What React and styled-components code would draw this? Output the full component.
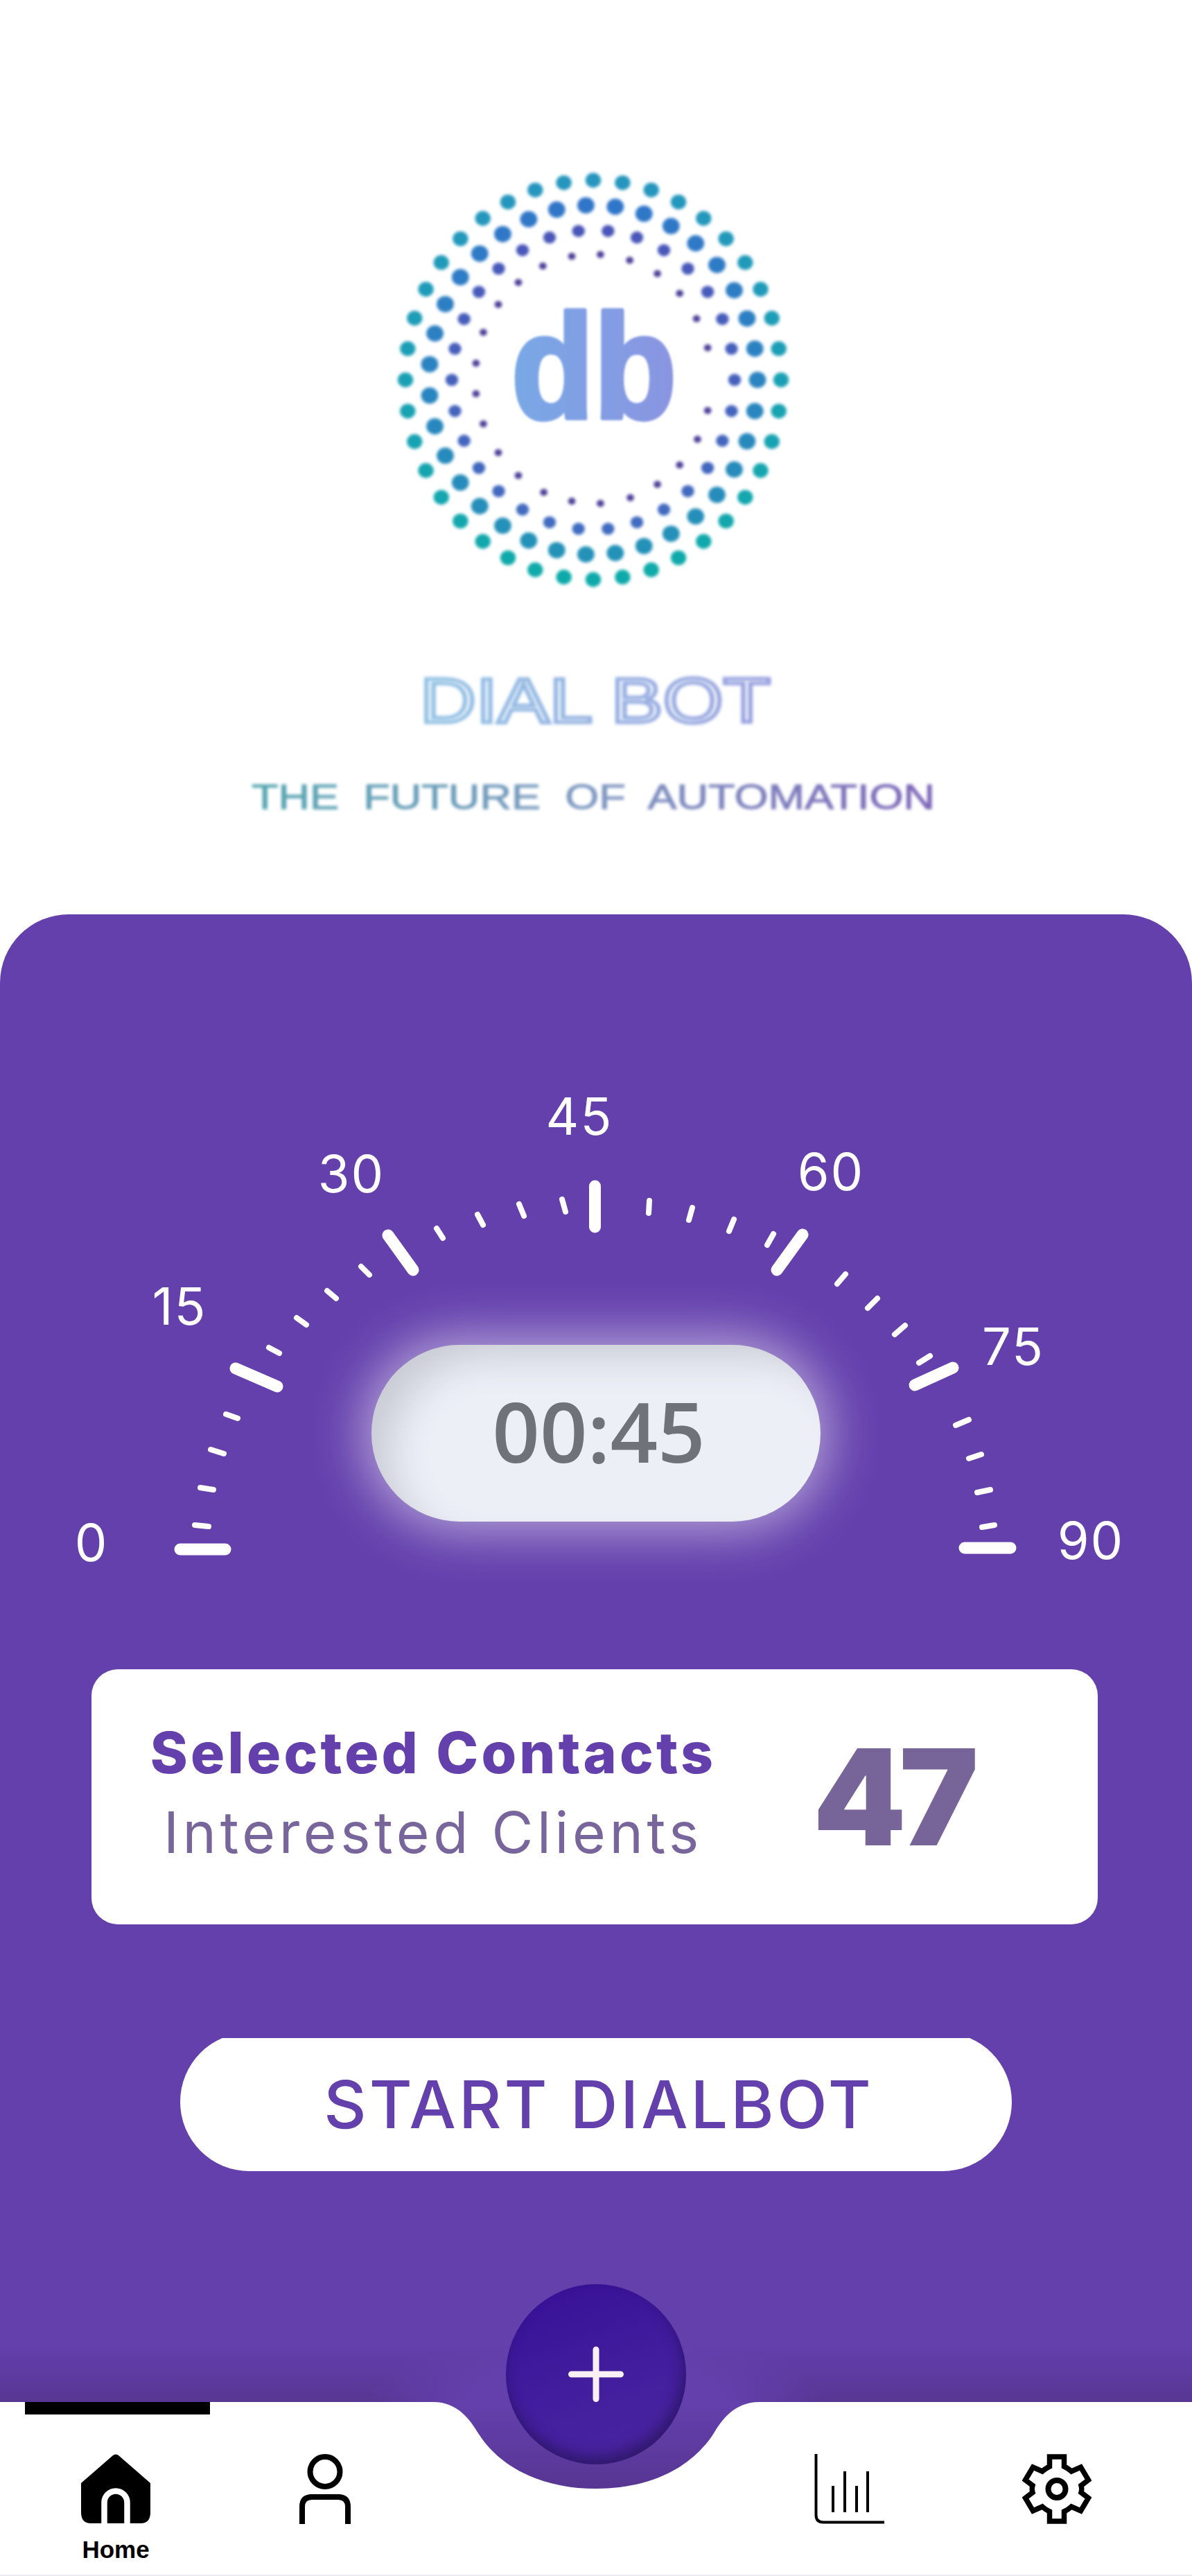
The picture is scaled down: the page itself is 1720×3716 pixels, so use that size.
import React from "react";
import styled, { createGlobalStyle } from "styled-components";

const Global = createGlobalStyle`
  html, body { margin: 0; padding: 0; background: #fff; }
  body { font-family: "Inter", "Liberation Sans", sans-serif; }
  * { box-sizing: border-box; }
`;

const Page = styled.div`
  position: relative;
  width: 1720px;
  height: 3716px;
  overflow: hidden;
  background: #fff;
`;
const Header = styled.header`
  height: 1319px;
  padding-top: 220px;
  display: flex;
  justify-content: center;
  align-items: flex-start;
`;
const LogoSvg = styled.svg`
  display: block;
  width: 1000px;
  height: 980px;
`;
const SoftGroup = styled.g`
  filter: blur(${(p) => p.$blur}px);
`;
const DialBot = styled.text`
  font-family: "Liberation Sans", sans-serif;
  font-weight: 400;
  font-size: 90px;
`;
const Tagline = styled.text`
  font-family: "Liberation Sans", sans-serif;
  font-weight: 400;
  font-size: 50px;
  word-spacing: 14px;
`;
const LogoMark = styled.text`
  font-family: "Liberation Sans", sans-serif;
  font-weight: 700;
  font-size: 214px;
`;
const Panel = styled.main`
  height: 2146px;
  padding-top: 241px;
  border-radius: 99px 99px 0 0;
  background:
    radial-gradient(ellipse 330px 110px at 50% 100%, #6440ad 55%, rgba(100, 64, 173, 0) 100%),
    linear-gradient(to bottom, #6440ad calc(100% - 85px), #573693 100%);
`;
const Gauge = styled.section`
  position: relative;
  width: 1720px;
  height: 720px;
`;
const GaugeSvg = styled.svg`
  display: block;
  width: 1720px;
  height: 720px;
`;
const GaugeLabel = styled.text`
  font-family: "Inter", sans-serif;
  font-weight: 400;
  font-size: 74px;
  letter-spacing: 2px;
  fill: #fff;
  text-anchor: middle;
`;
const TimerPill = styled.div`
  position: absolute;
  left: 536px;
  top: 380px;
  width: 648px;
  height: 255px;
  border-radius: 128px;
  background: #eceff6;
  box-shadow:
    0 0 75px 12px rgba(255, 255, 255, 0.55),
    inset 40px 30px 55px -14px rgba(60, 60, 80, 0.2);
  display: flex;
  align-items: center;
  justify-content: center;
  padding: 0 0 8px 8px;
`;
const TimerText = styled.span`
  font-family: "Open Sans", sans-serif;
  font-weight: 600;
  font-size: 120px;
  line-height: 1;
  color: #6f7278;
`;
const ContactsCard = styled.section`
  width: 1452px;
  height: 368px;
  margin: 128px 0 0 132px;
  background: #fff;
  border-radius: 38px;
  display: flex;
  align-items: center;
  padding-left: 73px;
`;
const ContactsText = styled.div`
  width: 840px;
  padding-bottom: 12px;
  display: flex;
  flex-direction: column;
  align-items: center;
`;
const SelectedLine = styled.div`
  font-family: "Inter", sans-serif;
  font-weight: 800;
  font-size: 82px;
  line-height: 115px;
  letter-spacing: 4.2px;
  color: #6440ad;
  white-space: nowrap;
`;
const InterestedLine = styled.div`
  font-family: "Inter", sans-serif;
  font-weight: 400;
  font-size: 82px;
  line-height: 115px;
  letter-spacing: 5.6px;
  color: #77659b;
  white-space: nowrap;
`;
const ContactCount = styled.div`
  margin-left: 128px;
  font-family: "Inter", sans-serif;
  font-weight: 900;
  font-size: 192px;
  line-height: 1;
  letter-spacing: -10px;
  color: #776498;
`;
const StartButton = styled.button`
  display: block;
  width: 1200px;
  height: 200px;
  margin: 156px 0 0 260px;
  border: 0;
  border-radius: 100px;
  background: #fff;
  clip-path: inset(8px 0 0 0);
  font-family: "Inter", sans-serif;
  font-weight: 500;
  font-size: 95px;
  letter-spacing: 4px;
  color: #6440ad;
  padding: 6px 0 0 8px;
`;
const Nav = styled.nav`
  position: relative;
  height: 251px;
  padding-top: 75px;
  display: grid;
  grid-template-columns: 334px 270px 516px 210px 390px;
  border-bottom: 2px solid #eceaf2;
`;
const NavIndicator = styled.div`
  position: absolute;
  left: 36px;
  top: 0;
  width: 267px;
  height: 18px;
  background: #000;
`;
const NavItem = styled.div`
  display: flex;
  flex-direction: column;
  align-items: center;
`;
const NavSpacer = styled.div``;
const NavLabel = styled.span`
  margin-top: 18px;
  font-family: "Liberation Sans", sans-serif;
  font-weight: 700;
  font-size: 35px;
  line-height: 38px;
  color: #000;
`;
const NavIcon = styled.svg`
  display: block;
  height: 101px;
`;
const Bump = styled.svg`
  position: absolute;
  left: 600px;
  top: 3465px;
  width: 520px;
  height: 125px;
`;
const Fab = styled.button`
  position: absolute;
  left: 730px;
  top: 3295px;
  width: 260px;
  height: 260px;
  border: 0;
  border-radius: 50%;
  background: linear-gradient(160deg, #370f97 0%, #3f1a9b 40%, #4c27a3 100%);
  box-shadow: inset -4px -12px 18px rgba(30, 15, 70, 0.55);
  display: flex;
  align-items: center;
  justify-content: center;
  padding: 0;
`;
const PlusIcon = styled.svg`
  display: block;
  width: 80px;
  height: 80px;
`;

const majorTicks = [
  [260, 2235, 325, 2235],
  [340, 1974, 400, 2000],
  [560, 1782, 596, 1832],
  [858.5, 1711, 858.5, 1770],
  [1158, 1781, 1121, 1832],
  [1375, 1973, 1320, 1998],
  [1392, 2233, 1458, 2233],
];
const minorTicks = [
  [281, 2200, 301, 2202], [289, 2146, 308, 2149], [304, 2091, 323, 2097], [326, 2040, 343, 2046],
  [388, 1944, 403, 1952], [428, 1901, 442, 1911], [472, 1862, 485, 1873], [521, 1827, 533, 1839],
  [630, 1772, 639, 1786], [689, 1752, 697, 1767], [749, 1737, 756, 1754], [811, 1730, 816, 1748],
  [937, 1732, 936, 1750], [999, 1742, 994, 1760], [1059, 1759, 1052, 1776], [1116, 1780, 1107, 1796],
  [1220, 1838, 1208, 1852], [1266, 1873, 1252, 1887], [1306, 1912, 1291, 1925], [1342, 1956, 1326, 1966],
  [1398, 2048, 1379, 2056], [1416, 2098, 1398, 2104], [1429, 2149, 1410, 2153], [1435, 2200, 1417, 2203],
];
const gaugeLabels = [
  ["0", 132, 2252], ["15", 259, 1911], ["30", 507, 1720], ["45", 836, 1637],
  ["60", 1199, 1717], ["75", 1462, 1969], ["90", 1574, 2249],
];

const hex = (v) => Math.round(v).toString(16).padStart(2, "0");
const mix = (a, b, t) =>
  "#" + [0, 1, 2].map((i) => hex(a[i] + (b[i] - a[i]) * t)).join("");

const CX = 856;
const CY = 548;
const ring = (count, rx, ry, r, top, bottom) =>
  Array.from({ length: count }, (_, i) => {
    const a = (i * 2 * Math.PI) / count;
    const x = CX + rx * Math.cos(a);
    const y = CY + ry * Math.sin(a);
    return { x, y, r, fill: mix(top, bottom, (y - CY + ry) / (2 * ry)) };
  });
const innerRing = [
  [708, 266], [798, 262], [890, 275], [617, 288], [540, 325], [477, 375], [430, 438], [407, 508],
  [407, 577], [430, 645], [477, 710], [540, 762], [620, 800], [708, 820], [798, 825], [892, 812],
  [977, 782], [1047, 738], [1103, 680], [1135, 615], [1135, 473], [1100, 407], [1047, 350], [977, 305],
].map(([zx, zy]) => ({ x: 500 + zx / 2.178, y: 200 + zy / 1.568, r: 5.4, fill: "#4d4298" }));

const dots = [
  ...ring(40, 271, 288, 11.2, [38, 150, 190], [14, 170, 170]),
  ...ring(35, 237, 252, 12.4, [48, 118, 200], [36, 146, 184]),
  ...ring(30, 204, 216, 9.2, [74, 86, 184], [64, 108, 192]),
  ...innerRing,
];

const GearPath =
  "M39.5 3.5H60.5V17.5Q66 20 71 24.5L84.5 18.5L95.5 37L85 45Q86.5 50 85 55L95.5 63L84.5 81.5L71 75.5Q66 80 60.5 82.5V96.5H39.5V82.5Q34 80 29 75.5L15.5 81.5L4.5 63L15 55Q13.5 50 15 45L4.5 37L15.5 18.5L29 24.5Q34 20 39.5 17.5Z";

export default function App() {
  return (
    <Page>
      <Global />
      <Header>
        <LogoSvg viewBox="360 220 1000 980" aria-label="Dial Bot logo">
          <defs>
            <linearGradient id="dbFill" x1="0" x2="1" y1="0" y2="0">
              <stop offset="0" stopColor="#78a8e6" />
              <stop offset="1" stopColor="#8a94e0" />
            </linearGradient>
            <linearGradient id="nameFill" x1="0" x2="1" y1="0" y2="0">
              <stop offset="0" stopColor="#86bde2" />
              <stop offset="1" stopColor="#8f96dc" />
            </linearGradient>
            <linearGradient id="tagFill" x1="0" x2="1" y1="0" y2="0">
              <stop offset="0" stopColor="#53a5b0" />
              <stop offset="0.5" stopColor="#7d97c0" />
              <stop offset="1" stopColor="#7c64b8" />
            </linearGradient>
          </defs>
          <SoftGroup $blur={2.2}>
            {dots.map((d, i) => (
              <ellipse key={i} cx={d.x} cy={d.y} rx={d.r} ry={d.r * 0.95} fill={d.fill} />
            ))}
          </SoftGroup>
          <SoftGroup $blur={1.6}>
            <LogoMark
              x="738"
              y="603"
              textLength="238"
              lengthAdjust="spacingAndGlyphs"
              fill="url(#dbFill)"
              stroke="url(#dbFill)"
              strokeWidth="7"
              strokeLinejoin="round"
            >
              db
            </LogoMark>
          </SoftGroup>
          <SoftGroup $blur={2}>
            <DialBot
              x="606"
              y="1042"
              textLength="506"
              lengthAdjust="spacingAndGlyphs"
              fill="#eef3fa"
              stroke="url(#nameFill)"
              strokeWidth="5"
              opacity="0.9"
            >
              DIAL BOT
            </DialBot>
            <Tagline
              x="363"
              y="1167"
              textLength="986"
              lengthAdjust="spacingAndGlyphs"
              fill="url(#tagFill)"
              stroke="url(#tagFill)"
              strokeWidth="1"
            >
              THE FUTURE OF AUTOMATION
            </Tagline>
          </SoftGroup>
        </LogoSvg>
      </Header>

      <Panel>
        <Gauge>
          <GaugeSvg viewBox="0 1560 1720 720">
            {gaugeLabels.map(([t, x, y]) => (
              <GaugeLabel key={t} x={x} y={y}>
                {t}
              </GaugeLabel>
            ))}
            {minorTicks.map(([x1, y1, x2, y2], i) => (
              <line key={i} x1={x1} y1={y1} x2={x2} y2={y2} stroke="#fff" strokeWidth="8" strokeLinecap="round" />
            ))}
            {majorTicks.map(([x1, y1, x2, y2], i) => (
              <line key={i} x1={x1} y1={y1} x2={x2} y2={y2} stroke="#fff" strokeWidth="17" strokeLinecap="round" />
            ))}
          </GaugeSvg>
          <TimerPill>
            <TimerText>00:45</TimerText>
          </TimerPill>
        </Gauge>

        <ContactsCard>
          <ContactsText>
            <SelectedLine>Selected Contacts</SelectedLine>
            <InterestedLine>Interested Clients</InterestedLine>
          </ContactsText>
          <ContactCount>47</ContactCount>
        </ContactsCard>

        <StartButton>START DIALBOT</StartButton>
      </Panel>

      <Nav>
        <NavIndicator />
        <NavItem>
          <NavIcon viewBox="0 0 100 101" width="100">
            <path d="M46 2Q50 -1 54 2L100 42V84Q100 100 86 100H14Q0 100 0 84V42Z" fill="#000" />
            <path d="M33.5 101V70a16.5 16.5 0 0 1 33 0V101" fill="none" stroke="#fff" strokeWidth="8.5" />
          </NavIcon>
          <NavLabel>Home</NavLabel>
        </NavItem>
        <NavItem>
          <NavIcon viewBox="0 0 74 101" width="74">
            <circle cx="37" cy="25.5" r="21.5" fill="none" stroke="#000" strokeWidth="8" />
            <path d="M4 101V76Q4 62 18 62H56Q70 62 70 76V101" fill="none" stroke="#000" strokeWidth="8" />
          </NavIcon>
        </NavItem>
        <NavSpacer />
        <NavItem>
          <NavIcon viewBox="0 0 101 101" width="101">
            <path d="M2.500 0V88Q2.500 98.500 13 98.500H101" fill="none" stroke="#000" strokeWidth="4" />
            <path d="M27 46V84M44 25V84M61 46V84M77 25V84" fill="none" stroke="#000" strokeWidth="4" />
          </NavIcon>
        </NavItem>
        <NavItem>
          <NavIcon viewBox="0 0 100 100" width="100">
            <path d={GearPath} fill="none" stroke="#000" strokeWidth="7.500" />
            <circle cx="50" cy="50" r="12.500" fill="none" stroke="#000" strokeWidth="8" />
          </NavIcon>
        </NavItem>
      </Nav>

      <Bump viewBox="600 3465 520 125">
        <defs>
          <linearGradient id="bumpFill" x1="0" x2="0" y1="0" y2="1">
            <stop offset="0" stopColor="#6440ad" />
            <stop offset="1" stopColor="#573693" />
          </linearGradient>
        </defs>
        <path
          d="M600 3465H625C660 3465 678 3490 690 3510C725 3565 790 3590 860 3590C930 3590 995 3565 1030 3510C1042 3490 1060 3465 1096 3465H1120V3464H600Z"
          fill="url(#bumpFill)"
        />
      </Bump>
      <Fab aria-label="Add">
        <PlusIcon viewBox="0 0 80 80">
          <path d="M4.500 40H75.500M40 4.500V75.500" fill="none" stroke="#f8f0f4" strokeWidth="9" strokeLinecap="round" />
        </PlusIcon>
      </Fab>
    </Page>
  );
}
